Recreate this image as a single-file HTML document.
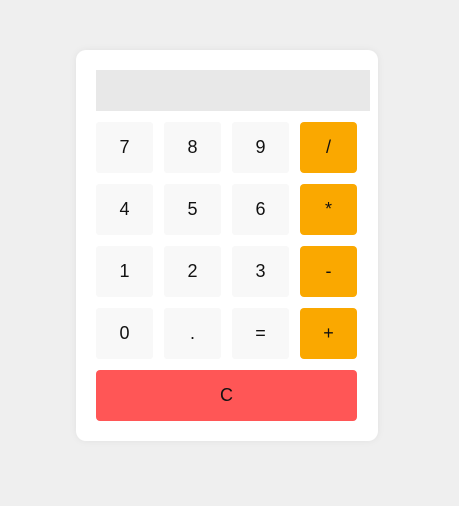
<!DOCTYPE html>
<html><head><style>
body{margin:0;width:459px;height:506px;background:#efefef;font-family:"Liberation Sans",sans-serif;position:relative;overflow:hidden}
.card{position:absolute;left:76px;top:50px;width:302px;height:391px;background:#fff;border-radius:10px;box-shadow:0 0 8px rgba(0,0,0,0.06)}
.disp{position:absolute;left:96px;top:70px;width:274px;height:41px;background:#e8e8e8}
.b{position:absolute;width:57px;height:51px;background:#f8f8f8;display:flex;align-items:center;justify-content:center;font-size:18px;color:#111;border-radius:3px}
.o{background:#faa800;border-radius:4px}
.c{left:96px;top:370px;width:261px;background:#ff5656;border-radius:4px}
</style></head><body>
<div class="card"></div>
<div class="disp"></div>
<div class="b" style="left:96px;top:122px">7</div>
<div class="b" style="left:164px;top:122px">8</div>
<div class="b" style="left:232px;top:122px">9</div>
<div class="b o" style="left:300px;top:122px">/</div>
<div class="b" style="left:96px;top:184px">4</div>
<div class="b" style="left:164px;top:184px">5</div>
<div class="b" style="left:232px;top:184px">6</div>
<div class="b o" style="left:300px;top:184px">*</div>
<div class="b" style="left:96px;top:246px">1</div>
<div class="b" style="left:164px;top:246px">2</div>
<div class="b" style="left:232px;top:246px">3</div>
<div class="b o" style="left:300px;top:246px">-</div>
<div class="b" style="left:96px;top:308px">0</div>
<div class="b" style="left:164px;top:308px">.</div>
<div class="b" style="left:232px;top:308px">=</div>
<div class="b o" style="left:300px;top:308px">+</div>
<div class="b c">C</div>
</body></html>
